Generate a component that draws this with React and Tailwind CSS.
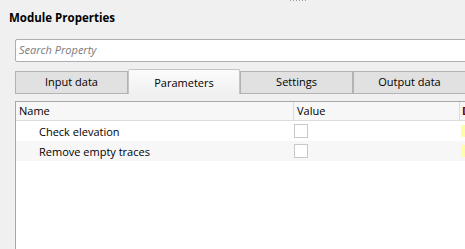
import React from "react";

const font = { fontFamily: '"Open Sans", "Noto Sans", sans-serif' };

const Tab = ({ label, active }) =>
  active ? (
    <div className="w-[112px] h-[25px] shrink-0 border border-b-0 border-[#c4c4c4] rounded-t-[2px] bg-gradient-to-b from-[#fcfcfc] to-[#f0f0f0] flex items-start justify-center pt-[5px] text-[11px] leading-[15px] text-black">
      {label}
    </div>
  ) : (
    <div className="w-[113px] h-[23px] shrink-0 border border-[#b3b3b3] bg-[#e1e1e1] flex items-center justify-center text-[11px] text-black">
      {label}
    </div>
  );

const Row = ({ name, shaded }) => (
  <div className={`flex h-[20px] items-center ${shaded ? "bg-[#f7f7f7]" : "bg-white"}`}>
    <div className="w-[278px] shrink-0 pl-[23px] text-[11px] leading-[15px] text-black">{name}</div>
    <div className="w-[166px] shrink-0">
      <div className="w-[14px] h-[14px] border border-[#c8c8c8] bg-white" />
    </div>
    <div className="w-[20px] h-[12px] shrink-0 bg-[#ffffa8] ml-[1px]" />
  </div>
);

export default function App() {
  return (
    <div className="w-[465px] h-[249px] bg-[#f0f0f0] overflow-hidden relative" style={font}>
      {/* splitter grip */}
      <div className="absolute top-0 left-[290px] flex gap-[2px]">
        {[0, 1, 2, 3, 4, 5].map((i) => (
          <div key={i} className="w-[1px] h-[1px] bg-[#a0a0a0]" />
        ))}
      </div>

      <div className="pl-[9px] pt-[10px] text-[11.5px] font-bold leading-[16px] text-black">
        Module Properties
      </div>

      <div className="ml-[15px] mt-[13px] w-[470px] h-[23px] border border-[#abadb3] rounded-[2px] bg-white flex items-center pl-[3px]">
        <span className="text-[11px] italic text-[#7a7a7a]">Search Property</span>
      </div>

      <div className="ml-[15px] mt-[7px] flex h-[25px] items-end w-[480px]">
        <Tab label="Input data" />
        <Tab label="Parameters" active />
        <Tab label="Settings" />
        <Tab label="Output data" />
      </div>

      <div className="ml-[15px] mt-[7px] w-[480px] border-t border-l border-[#a8a8a8] bg-white h-[160px]">
        <div className="flex h-[19px] items-center bg-[#f7f7f7] border-b border-[#dcdcdc] text-[11px] text-black">
          <div className="w-[278px] shrink-0 pl-[3px] border-r border-[#dcdcdc] h-full flex items-center">Name</div>
          <div className="w-[166px] shrink-0 pl-[3px] border-r border-[#dcdcdc] h-full flex items-center">Value</div>
          <div className="pl-[2px] font-bold text-[#700010]">D</div>
        </div>
        <Row name="Check elevation" />
        <Row name="Remove empty traces" shaded />
      </div>
    </div>
  );
}
